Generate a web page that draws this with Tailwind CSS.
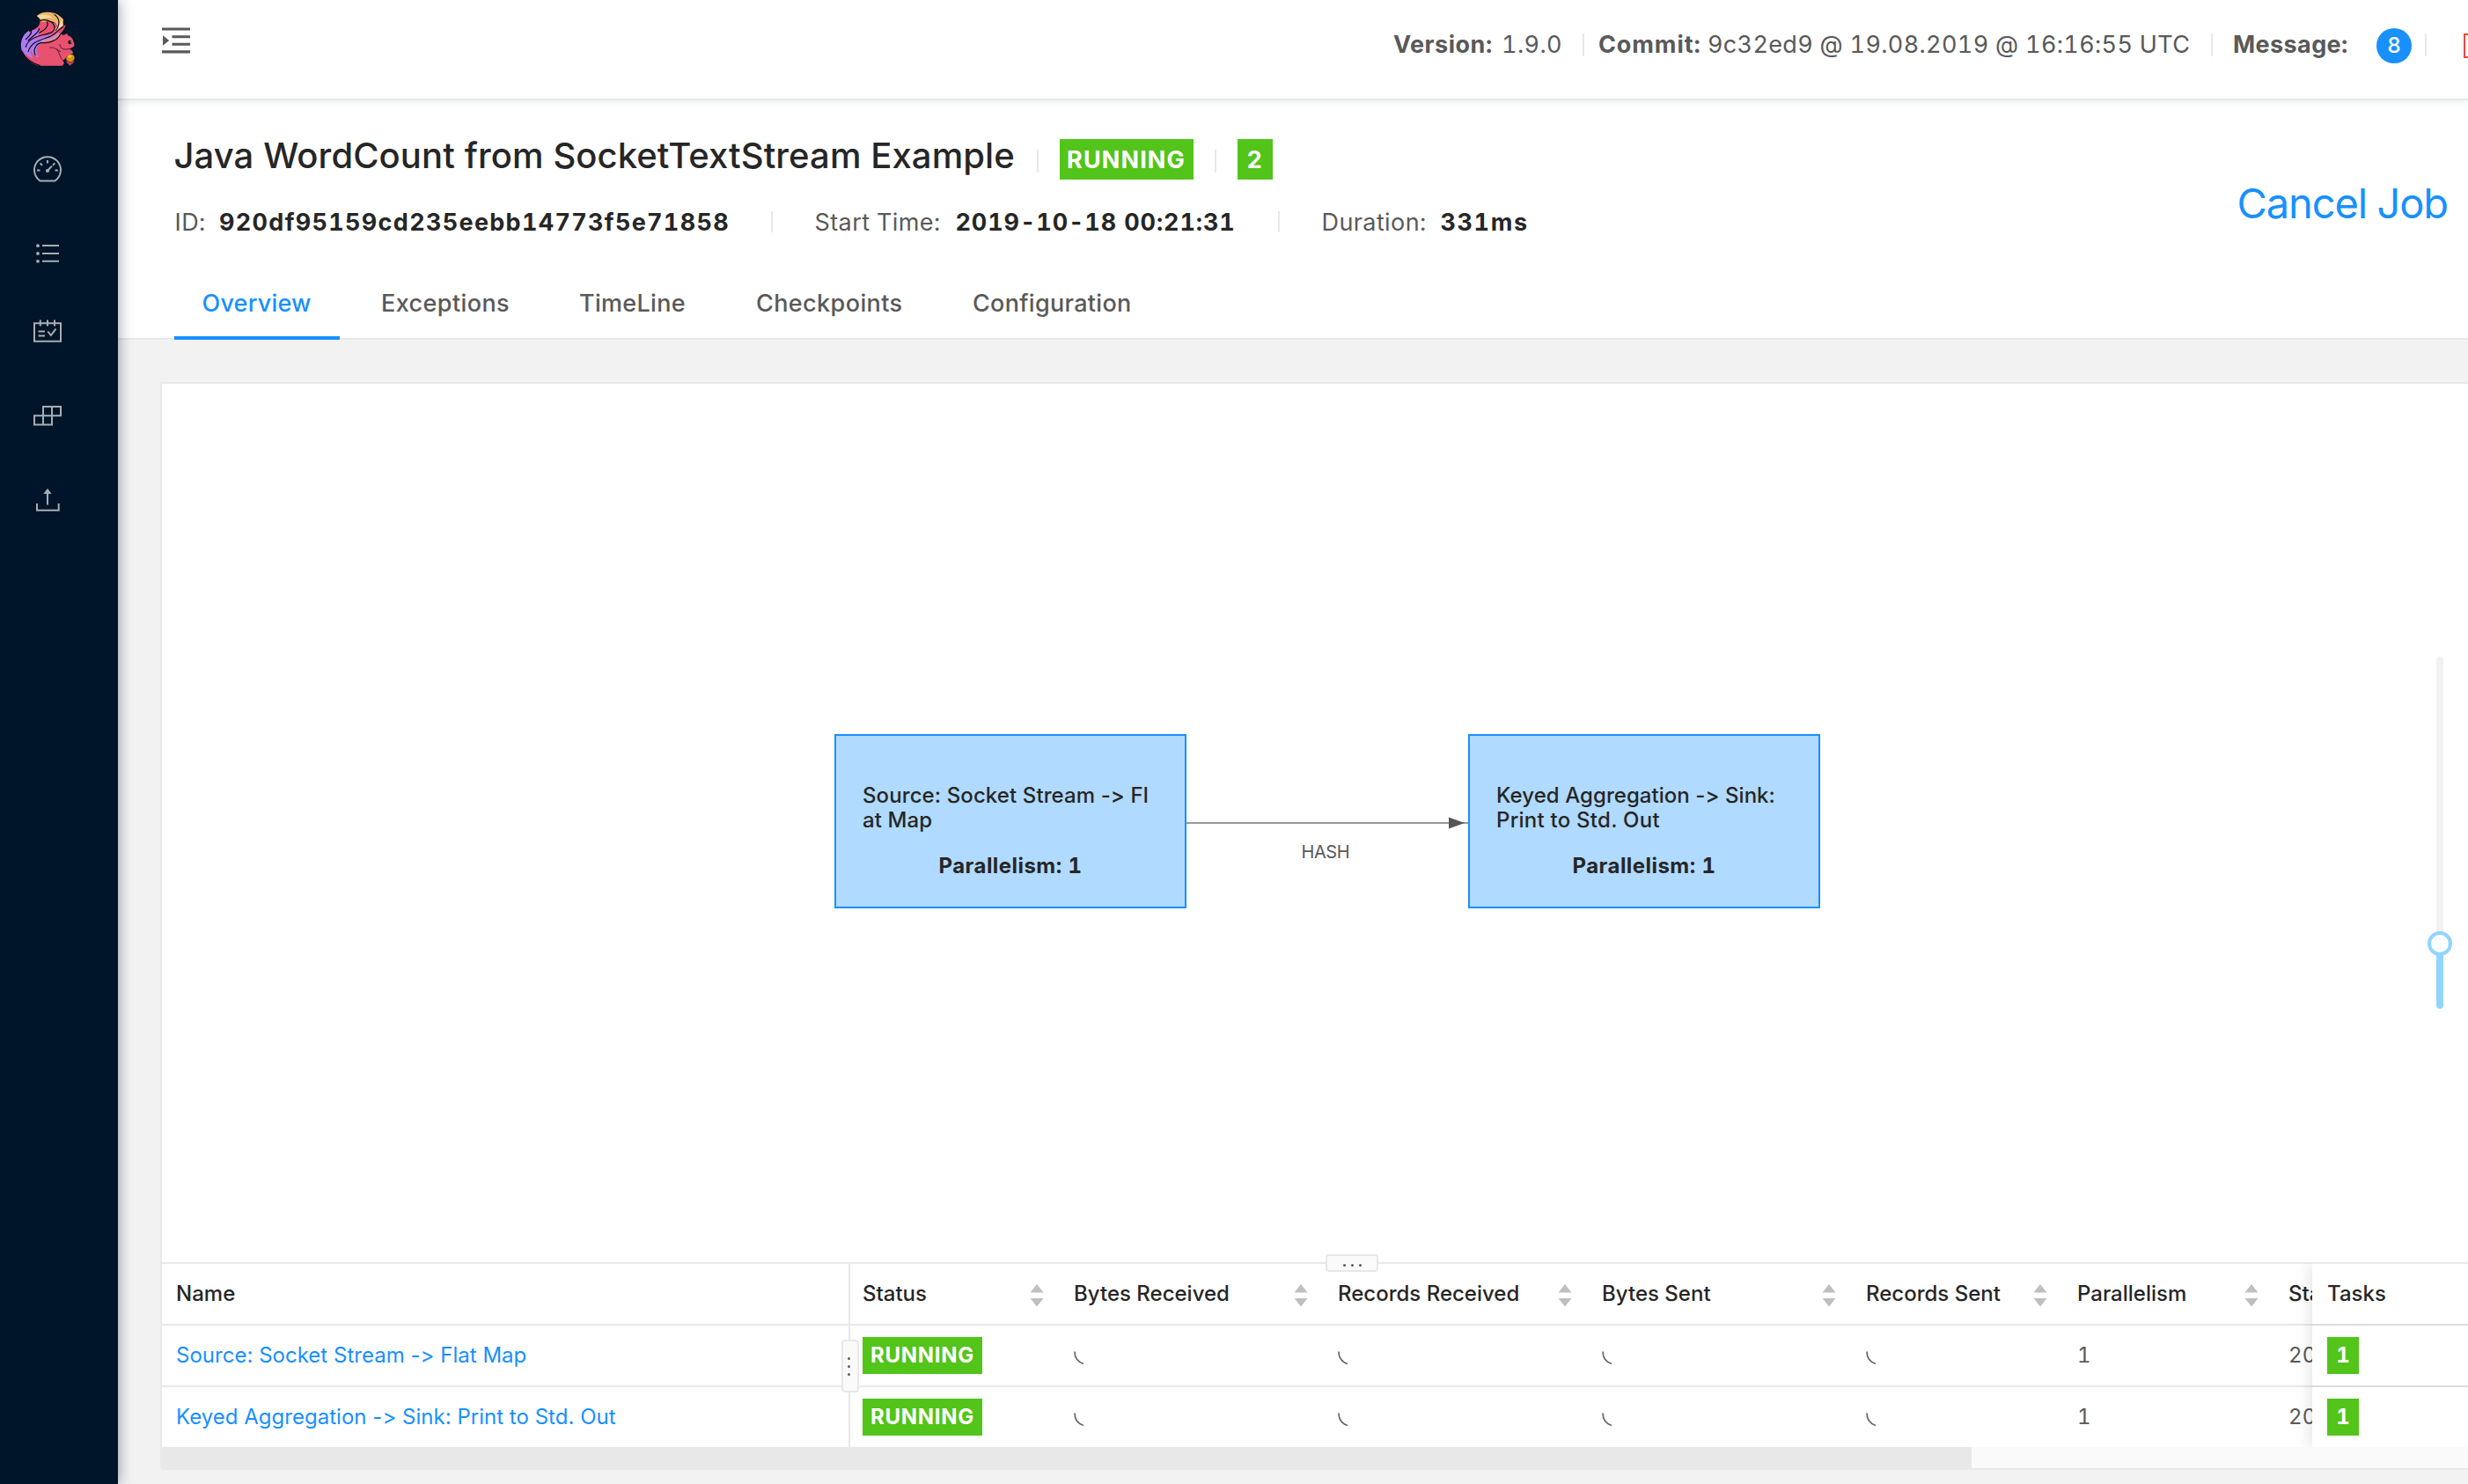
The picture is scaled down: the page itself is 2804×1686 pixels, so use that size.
<!DOCTYPE html>
<html lang="en">
<head>
<meta charset="utf-8">
<title>Apache Flink Web Dashboard</title>
<script src="https://cdn.jsdelivr.net/npm/@tailwindcss/browser@4"></script>
</head>
<body class="flex h-[1686px] w-[2804px] overflow-hidden bg-[#f2f2f2] font-[Inter,sans-serif] text-[27px] leading-[40px] tracking-[0.4px] text-[#595959] tabular-nums">

<aside class="relative z-20 h-full w-[134px] shrink-0 bg-[#001529] shadow-[2px_0_14px_rgba(0,21,41,0.35)]">
  <svg class="block" width="134" height="620" viewBox="0 0 134 620" fill="none" stroke="#a6adb4" stroke-width="2">
    <!-- logo -->
    <g transform="scale(.33333)" stroke="none">
      <path fill="#e8516f" d="M130 224C100 216 78 190 74 160C71 132 88 112 108 104C126 98 138 86 136 70C160 70 200 80 214 92L224 84C222 94 216 104 206 114C212 122 218 118 224 117L229 113L231 121C242 124 249 132 251 144C254 150 255 155 251 159C246 163 240 164 236 168C246 170 250 176 248 184C238 184 228 190 222 200L214 208C220 212 220 220 212 224Z"/>
      <path fill="#b07af0" d="M74 172C66 142 78 118 98 104L100 112C108 104 122 98 134 100C140 112 128 126 108 138C140 120 160 124 196 112C186 130 166 140 142 148C126 154 118 172 132 194L128 196C114 190 104 176 104 164C102 180 108 194 116 202C96 192 82 184 74 172Z"/>
      <path fill="#eeb466" d="M126 54C138 42 160 38 182 44C196 46 206 56 216 66L214 88C208 84 204 92 200 96C194 76 176 68 158 74C142 78 134 70 136 62Z"/>
      <path fill="#f6d9a4" d="M126 54C144 46 166 50 182 62C166 58 150 60 138 66ZM184 102C196 92 208 78 210 62L216 88C208 90 198 100 190 108Z"/>
      <path fill="#dd8a9d" d="M140 138C164 134 184 126 198 112L206 116C198 134 176 142 150 146Z"/>
      <g fill="none" stroke="#0b0a18" stroke-width="3.5" stroke-linecap="round">
        <path d="M136 70C164 62 188 78 186 98C184 112 166 114 142 120C112 128 92 142 88 160"/>
        <path d="M106 104C110 114 100 122 88 134M134 98C132 112 112 122 96 138"/>
        <path d="M160 74C168 88 152 104 134 112"/>
        <path d="M186 50C204 62 206 84 190 104M214 92C200 100 190 116 172 124C140 136 108 140 96 176"/>
        <path d="M206 116C196 138 168 146 140 146C122 150 112 168 120 188M74 176C90 204 112 216 136 224"/>
        <path d="M170 162C188 160 196 172 206 176M204 152C206 166 216 172 238 166M194 168C206 184 204 200 216 206" stroke-width="2"/>
      </g>
      <path fill="#d9930f" d="M226 196C230 184 248 182 253 192C256 202 250 210 240 211C230 210 224 204 226 196Z"/>
      <path fill="#f5c542" d="M234 188h10v8h-12z"/>
      <path fill="#c8405c" d="M226 206C234 213 246 213 253 206C252 216 244 218 238 224C234 218 226 216 226 206Z"/>
      <ellipse cx="238" cy="144" rx="6" ry="7" fill="#111"/><circle cx="241" cy="142" r="2" fill="#ccc"/>
    </g>
    <!-- overview -->
    <path d="M45.5 205.5a15 15 0 1 1 17 0z" stroke-linejoin="round"/>
    <path d="M42 193.5h3.5M62.5 193.5h3.5M54 182v3.5M45.6 185.4l2.4 2.4M62.4 185.4l-2.4 2.4M54 193.8l5-5.2"/>
    <circle cx="54" cy="194" r="2.1" fill="#a6adb4" stroke="none"/>
    <!-- job list -->
    <path d="M48 279h19M48 288h19M48 296.700h19"/>
    <g fill="#a6adb4" stroke="none"><circle cx="43" cy="279.200" r="1.9"/><circle cx="43" cy="288" r="1.9"/><circle cx="43" cy="296.800" r="1.9"/></g>
    <!-- completed jobs -->
    <path d="M39 367.200h30v20.500h-30zM45.800 363.500v7M54 363.500v7M62 363.500v7M43.500 376.500h7.500M43.500 381.500h7.500M54.300 376.500l3.600 4.500 5.600-7.300"/>
    <!-- task managers -->
    <path d="M49 462h20v10.200h-20zM59 462v20M39 472.200h20v10.200h-20zM49 472v10"/>
    <!-- submit -->
    <path d="M54 559v14.500M42 572v7.700h24.700v-7.700"/><path d="M54 555l4.600 6h-9.200z" fill="#a6adb4" stroke="none"/>
  </svg>
</aside>

<main class="flex h-full min-w-0 flex-1 flex-col overflow-hidden">
  <header class="relative z-10 flex h-[114px] w-[2670px] shrink-0 items-start overflow-x-clip border-b-2 border-[#e6e9e8] bg-white shadow-[0_2px_8px_rgba(0,21,41,0.08)]">
    <svg class="ml-[50px] mt-[30px] shrink-0" width="32" height="32" viewBox="0 0 32 32" fill="#595959"><path d="M0 1.400h32v3.200H0zM11.500 10.200H32v3H11.500zM11.500 18.800H32v3H11.500zM0 27.200h32v3.200H0zM1 10.200l7.200 5.800L1 21.800z"/></svg>
    <div class="ml-[1367px] flex shrink-0 items-center whitespace-nowrap pt-[30px]">
      <div class="w-[123px] font-bold tracking-[0.5px]">Version:</div>
      <div class="w-[92px]">1.9.0</div>
      <div class="h-[26px] w-[2px] bg-[#e8e8e8]"></div>
      <div class="ml-[16px] w-[124px] font-bold tracking-[0.9px]">Commit:</div>
      <div class="w-[572px] tracking-[0.33px]">9c32ed9 @ 19.08.2019 @ 16:16:55 UTC</div>
      <div class="h-[26px] w-[2px] bg-[#e8e8e8]"></div>
      <div class="ml-[23px] w-[163px] font-bold tracking-[0.4px]">Message:</div>
      <div class="mt-[2px] flex size-10 items-center justify-center rounded-full bg-[#1890ff] text-[24px] font-medium tracking-normal text-white">8</div>
      <div class="ml-[15px] h-[26px] w-[2px] bg-[#e8e8e8]"></div>
      <div class="ml-[42px] mt-[2px] h-[28px] w-[60px] shrink-0 border-2 border-[#e84b3c]"></div>
    </div>
  </header>

  <section class="flex h-[272px] w-[2670px] shrink-0 justify-between border-b-2 border-[#e8e8e8] bg-white">
    <div class="flex flex-col whitespace-nowrap pl-[63.500px]">
      <div class="mt-[44px] flex h-[46px] items-center">
        <h1 class="mt-[-8px] w-[980px] text-[40px] font-medium tracking-[0.08px] text-[#262626]">Java WordCount from SocketTextStream Example</h1>
        <div class="mt-[4px] h-[26px] w-[2px] bg-[#e8e8e8]"></div>
        <div class="ml-[24px] flex h-[46px] w-[152px] items-center justify-center bg-[#52c41a] pt-[2px] font-bold tracking-[1.1px] text-white">RUNNING</div>
        <div class="ml-[24px] mt-[4px] h-[26px] w-[2px] bg-[#e8e8e8]"></div>
        <div class="ml-[24px] flex h-[46px] w-[40px] items-center justify-center bg-[#52c41a] pt-[2px] font-bold text-white">2</div>
      </div>
      <div class="mt-[29px] flex h-[40px] items-center">
        <div class="w-[51.500px] pl-px">ID:</div>
        <div class="w-[626.500px] font-bold tracking-[1.320px] text-[#262626]">920df95159cd235eebb14773f5e71858</div>
        <div class="-mt-[2px] h-[24px] w-[2px] bg-[#e8e8e8]"></div>
        <div class="ml-[48px] w-[160px]">Start Time:</div>
        <div class="w-[366px] font-bold tracking-[0.9px] text-[#262626]">2019-10-18 00:21:31</div>
        <div class="-mt-[2px] h-[24px] w-[2px] bg-[#e8e8e8]"></div>
        <div class="ml-[48px] w-[135px]">Duration:</div>
        <div class="font-bold tracking-[1.600px] text-[#262626]">331ms</div>
      </div>
      <nav class="mt-[31px] flex h-[82px] font-medium leading-[82px]">
        <a class="mr-[14px] w-[188.500px] border-b-4 border-[#1890ff] pl-[32px] tracking-[0.2px] text-[#1890ff]">Overview</a>
        <a class="w-[225px] pl-[33px]">Exceptions</a>
        <a class="w-[201px] pl-[33px] tracking-[0.3px]">TimeLine</a>
        <a class="w-[246px] pl-[33px]">Checkpoints</a>
        <a class="pl-[33px] tracking-[0.3px]">Configuration</a>
      </nav>
    </div>
    <button class="mt-[87px] h-[60px] w-[262.500px] whitespace-nowrap text-left text-[47px] leading-[60px] tracking-[-1.100px] text-[#1890ff]">Cancel Job</button>
  </section>

  <section class="relative ml-[48px] mt-[48px] flex h-[1236px] w-[2660px] shrink-0 flex-col rounded-bl border-2 border-[#e8e8e8] bg-white text-[24px] tracking-[0.1px]">
    <div class="relative h-[998px] shrink-0 text-[#262626]">
      <svg class="absolute left-0 top-0" width="2500" height="998" viewBox="184 436 2500 998"><path d="M1348 935h320" stroke="#999" stroke-width="2"/><path d="M1646 928.500l18 6.500-18 6.500z" fill="#555"/></svg>
      <div class="absolute left-[764px] top-[398px] flex h-[198px] w-[400px] flex-col border-2 border-[#1890ff] bg-[#b0daff] pt-[54px] font-medium leading-[28px] tracking-[0.1px]">
        <p class="whitespace-nowrap pl-[30px] proportional-nums">Source: Socket Stream -&gt; Fl<br>at Map</p>
        <p class="mt-[24px] text-center font-bold tracking-[0.45px]">Parallelism: 1</p>
      </div>
      <div class="absolute left-[1294.500px] top-[518px] text-[20px] leading-[28px] tracking-[-0.400px] text-[#595959]">HASH</div>
      <div class="absolute left-[1484px] top-[398px] flex h-[198px] w-[400px] flex-col border-2 border-[#1890ff] bg-[#b0daff] pt-[54px] font-medium leading-[28px] tracking-[0.05px]">
        <p class="whitespace-nowrap pl-[30px] proportional-nums">Keyed Aggregation -&gt; Sink:<br><span class="tracking-[0.25px]">Print to Std. Out</span></p>
        <p class="mt-[24px] text-center font-bold tracking-[0.45px]">Parallelism: 1</p>
      </div>
      <div class="absolute left-[2584px] top-[310px] h-[400px] w-[8px] rounded-full bg-[#f2f2f2]">
        <div class="absolute bottom-0 left-0 h-[74px] w-[8px] rounded-full bg-[#91d5ff]"></div>
        <div class="absolute left-[-10px] top-[312px] size-[28px] rounded-full border-4 border-[#91d5ff] bg-white"></div>
      </div>
    </div>
    <div class="relative flex h-[210px] shrink-0 border-t-2 border-[#e8e8e8]">
      <div class="w-[780px] shrink-0 tracking-[0.02px] proportional-nums">
        <div class="flex h-[70px] items-center border-b-2 border-[#e8e8e8] pl-4 font-medium text-[#262626]">Name</div>
        <div class="flex h-[70px] items-center border-b-2 border-[#e8e8e8] pl-4 text-[#1890ff]">Source: Socket Stream -&gt; Flat Map</div>
        <div class="flex h-[68px] items-center pl-4 text-[#1890ff]">Keyed Aggregation -&gt; Sink: Print to Std. Out</div>
      </div>
      <div class="w-[1663px] shrink-0 overflow-hidden whitespace-nowrap border-l-2 border-[#e8e8e8]" id="cols"></div>
      <div class="relative w-[240px] shrink-0 bg-white shadow-[-4px_0_16px_rgba(0,0,0,0.1)] [clip-path:inset(0_0_0_-30px)]">
        <div class="flex h-[70px] items-center border-b-2 border-[#dcdcdc] pl-[17px] font-medium tracking-normal text-[#262626]">Tasks</div>
        <div class="flex h-[70px] items-center border-b-2 border-[#dcdcdc] pl-[17px]"><span class="-mt-px flex h-[42px] w-[36px] items-center justify-center bg-[#52c41a] font-bold text-white">1</span></div>
        <div class="flex h-[68px] items-center pl-[17px]"><span class="-mt-px flex h-[42px] w-[36px] items-center justify-center bg-[#52c41a] font-bold text-white">1</span></div>
      </div>
      <div class="absolute left-[772px] top-[86px] flex h-[60px] w-[20px] flex-col items-center justify-center gap-[6px] rounded border-2 border-[#e8e8e8] bg-[#fafafa] pr-[4px]"><i class="size-[3px] rounded-full bg-[#595959]"></i><i class="size-[3px] rounded-full bg-[#595959]"></i><i class="size-[3px] rounded-full bg-[#595959]"></i></div>
      <div class="absolute left-[1322px] top-[-11px] flex h-[20px] w-[60px] items-center justify-center gap-[6px] rounded border-2 border-[#e8e8e8] bg-[#fafafa] pt-[4px]"><i class="size-[3px] rounded-full bg-[#595959]"></i><i class="size-[3px] rounded-full bg-[#595959]"></i><i class="size-[3px] rounded-full bg-[#595959]"></i></div>
    </div>
    <div class="h-[24px] shrink-0 bg-[#fafafa]"><div class="h-[26px] w-[2056px] bg-[#e8e8e8]"></div></div>
  </section>
</main>

<script>
const cols = [["Status","w-[238px] pl-[14px]"],["Bytes Received","w-[300px] pl-4"],["Records Received","w-[300px] pl-4"],["Bytes Sent","w-[300px] pl-4"],["Records Sent","w-[240px] pl-4"],["Parallelism","w-[240px] pl-4"],["Start Time","w-[240px] pl-4"]];
const sorter = '<svg class="mr-[18px] mt-[3px]" width="16" height="26" viewBox="0 0 16 26" fill="#bfbfbf"><path d="M8 0l7.500 9.500H.5zM8 25.500L.5 16h15z"/></svg>';
const spin = '<svg class="mt-[6px]" width="14" height="16" viewBox="0 0 14 16" fill="none" stroke="#666" stroke-width="1.7"><path d="M1 .5C1 7 4 12 11 14.500"/></svg>';
const run = '<span class="-mt-px flex h-[42px] w-[136px] items-center justify-center bg-[#52c41a] font-bold tracking-[0.7px] text-white">RUNNING</span>';
const vals = [run, spin, spin, spin, spin, "1", "2019-10-18"];
const row = (c, cells) => `<div class="flex w-[1900px] ${c}">${cells}</div>`;
const cells = cols.map(([t, c], i) => `<div class="flex shrink-0 items-center ${c}">${vals[i]}</div>`).join("");
document.getElementById("cols").innerHTML =
  row("h-[70px] border-b-2 border-[#e8e8e8] font-medium tracking-normal text-[#262626]", cols.map(([t, c]) => `<div class="flex shrink-0 items-center justify-between ${c}"><span>${t}</span>${sorter}</div>`).join("")) +
  row("h-[70px] border-b-2 border-[#e8e8e8]", cells) +
  row("h-[68px]", cells);
</script>
</body>
</html>
